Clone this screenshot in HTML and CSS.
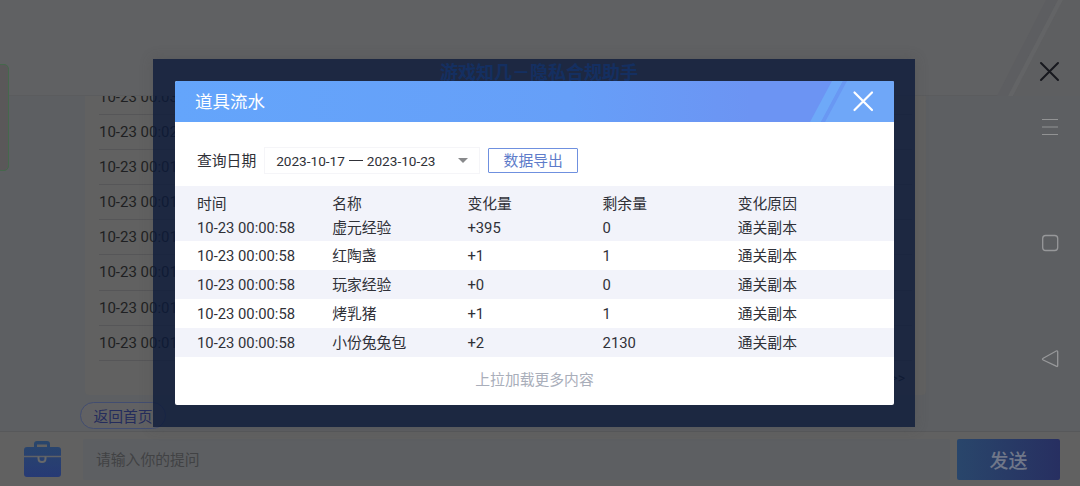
FILE: index.html
```html
<!DOCTYPE html>
<html lang="zh-CN">
<head>
  <meta charset="UTF-8">
  <title>道具流水</title>
  <link rel="stylesheet" href="styles.css">
</head>
<body>
  <div class="page">
    <header class="main-header">
      <h1>游戏知几－隐私合规助手</h1>
      <svg class="stripes" width="90" height="96" viewBox="0 0 90 96">
        <path d="M56 0H68L18 96H7z" fill="#5d5e61"/>
        <path d="M68 0H73L23 96H18z" fill="#636466"/>
        <path d="M73 0H90V96H23z" fill="#5e5f61"/>
      </svg>
    </header>

    <main class="chat">
      <div class="record-card">
        <ul class="record-list">
          <li>10-23 00:03</li>
          <li>10-23 00:02</li>
          <li>10-23 00:01</li>
          <li>10-23 00:01</li>
          <li>10-23 00:01</li>
          <li>10-23 00:01</li>
          <li>10-23 00:01</li>
          <li>10-23 00:01</li>
        </ul>
        <p class="record-more">&gt;&gt;</p>
      </div>
      <button class="home-btn">返回首页</button>
    </main>

    <footer class="input-bar">
      <svg class="case-icon" width="37" height="36" viewBox="0 0 37 36">
        <defs>
          <linearGradient id="case" x1="0" y1="0" x2="0" y2="1">
            <stop offset="0" stop-color="#29466b"/>
            <stop offset="1" stop-color="#273a75"/>
          </linearGradient>
        </defs>
        <path fill="url(#case)" fill-rule="evenodd" d="M10 6V3Q10 0 13 0H23Q26 0 26 3V6H34Q37 6 37 9V33Q37 36 34 36H3Q0 36 0 33V9Q0 6 3 6zM13 6H23V3.500H13z"/>
        <path d="M0 15.500H37" stroke="#5f6266" stroke-width="1.300"/>
        <path d="M14.500 15.500V17.500Q14.500 21 18 21Q21.500 21 21.500 17.500V15.500" fill="none" stroke="#66686a" stroke-width="2"/>
      </svg>
      <div class="question">请输入你的提问</div>
      <button class="send-btn">发送</button>
    </footer>
  </div>

  <div class="edge-handle"></div>
  <div class="frame"></div>

  <section class="modal">
    <div class="modal-header">
      <h2>道具流水</h2>
      <svg class="header-art" width="90" height="41" viewBox="0 0 90 41">
        <path d="M28 0H39L17 41H6z" fill="#6ea9f8"/>
        <path d="M39 0H43L21 41H17z" fill="#6998f3"/>
        <path d="M43 0H90V41H21z" fill="#6fa7f8"/>
        <path d="M50.500 11.500L68 29M68 11.500L50.500 29" stroke="#fff" stroke-width="2.200" stroke-linecap="round"/>
      </svg>
    </div>

    <div class="filter">
      <label>查询日期</label>
      <div class="date-select">
        <span>2023-10-17</span><i class="dash"></i><span>2023-10-23</span>
        <i class="arrow"></i>
      </div>
      <button class="export-btn">数据导出</button>
    </div>

    <div class="table">
      <div class="row head"><span>时间</span><span>名称</span><span>变化量</span><span>剩余量</span><span>变化原因</span></div>
      <div class="row first"><span>10-23 00:00:58</span><span>虚元经验</span><span>+395</span><span>0</span><span>通关副本</span></div>
      <div class="row"><span>10-23 00:00:58</span><span>红陶盏</span><span>+1</span><span>1</span><span>通关副本</span></div>
      <div class="row gray"><span>10-23 00:00:58</span><span>玩家经验</span><span>+0</span><span>0</span><span>通关副本</span></div>
      <div class="row"><span>10-23 00:00:58</span><span>烤乳猪</span><span>+1</span><span>1</span><span>通关副本</span></div>
      <div class="row gray"><span>10-23 00:00:58</span><span>小份兔兔包</span><span>+2</span><span>2130</span><span>通关副本</span></div>
    </div>
    <p class="load-more">上拉加载更多内容</p>
  </section>

  <svg class="system-icons" width="24" height="320" viewBox="0 0 24 320">
    <path d="M4 4L21 21M21 4L4 21" stroke="#17181e" stroke-width="2" stroke-linecap="round"/>
    <path d="M5 60.500H21M5 68H21M5 75.500H21" stroke="#929394" stroke-width="1.200"/>
    <rect x="5.700" y="176.500" width="15" height="15" rx="3" fill="none" stroke="#97989a" stroke-width="1.300"/>
    <path d="M6.200 299.200L19.200 292Q20.700 291.500 20.700 293V306.500Q20.700 308 19.200 307.200L6.200 301Q4.700 300 6.200 299.200z" fill="none" stroke="#97989a" stroke-width="1.300"/>
  </svg>
</body>
</html>
```

FILE: styles.css
```css
* {
  box-sizing: border-box;
  margin: 0;
  padding: 0;
}

body {
  width: 1080px;
  height: 486px;
  overflow: hidden;
  position: relative;
  font-family: Roboto, "Noto Sans CJK SC", sans-serif;
  background: #5f6163;
}

button {
  font-family: inherit;
}

.page {
  display: flex;
  flex-direction: column;
  height: 486px;
}

.main-header {
  height: 96px;
  flex-shrink: 0;
  display: flex;
  justify-content: space-between;
  background: #606163;
  border-bottom: 1px solid #5b5c5e;
}

.main-header h1 {
  padding: 60px 0 0 440px;
  font-size: 18px;
  line-height: 26px;
  font-weight: 700;
  color: #3484ff;
}

.chat {
  height: 335px;
  flex-shrink: 0;
  padding-left: 80px;
  background: #5d5f62;
}

.record-card {
  width: 841px;
  height: 299px;
  margin-left: 5px;
  padding: 0 14px;
  overflow: hidden;
  background: #616161;
  border-radius: 0 0 4px 4px;
}

.record-list {
  list-style: none;
  margin-top: -16px;
}

.record-list li {
  height: 35.1px;
  line-height: 35px;
  font-size: 15px;
  color: #1e1f22;
  border-bottom: 1px solid #565658;
}

.record-more {
  margin-right: 7px;
  text-align: right;
  font-size: 14px;
  line-height: 34px;
  color: #1e1f22;
}

.home-btn {
  display: block;
  width: 86px;
  height: 27px;
  margin-top: 7px;
  padding-top: 2px;
  font-size: 14.8px;
  line-height: 25px;
  color: #242c5c;
  background: #616163;
  border: 1px solid #424d70;
  border-radius: 14px;
}

.input-bar {
  height: 55px;
  flex-shrink: 0;
  display: flex;
  align-items: center;
  padding: 0 20px 0 24px;
  background: #616161;
  border-top: 1px solid #57585a;
}

.question {
  flex: 1;
  height: 41px;
  margin: 0 7px 0 22px;
  padding-left: 13px;
  line-height: 42px;
  font-size: 14.8px;
  color: #414244;
  background: #5d5f62;
  border-radius: 2px;
}

.send-btn {
  width: 103px;
  height: 41px;
  border: none;
  border-radius: 2px;
  font-size: 19px;
  font-weight: 500;
  color: #707789;
  background: linear-gradient(90deg, #29466b, #272f61);
}

.edge-handle {
  position: absolute;
  left: -4px;
  top: 64px;
  width: 13px;
  height: 107px;
  background: #5a5859;
  border: 1px solid #45684c;
  border-radius: 5px;
}

/* translucent, the page behind shows faintly */
.frame {
  position: absolute;
  left: 153px;
  top: 59px;
  width: 762px;
  height: 368px;
  background: rgba(13, 26, 58, 0.8);
  box-shadow: 0 0 12px rgba(70, 70, 70, 0.3);
}

.modal {
  position: absolute;
  left: 175px;
  top: 81px;
  width: 719px;
  height: 324px;
  overflow: hidden;
  background: #fff;
  border-radius: 2px;
}

.modal-header {
  height: 41px;
  display: flex;
  justify-content: space-between;
  background: linear-gradient(90deg, #64a5fb, #669ff8 55%, #6c94f3 80%);
}

.modal-header h2 {
  padding-left: 20px;
  font-size: 17.5px;
  line-height: 42px;
  font-weight: 400;
  color: #fff;
}

.filter {
  height: 64px;
  display: flex;
  align-items: center;
  padding: 13px 0 0 22px;
  font-size: 14.8px;
  line-height: 20px;
  color: #303138;
}

.date-select {
  width: 216px;
  height: 27px;
  margin: 0 8px;
  padding: 0 11px;
  display: flex;
  align-items: center;
  font-size: 13.6px;
  line-height: 18px;
  border: 1px solid #f5f5f8;
}

.dash {
  width: 14px;
  height: 1px;
  margin: 0 4px;
  background: #303138;
}

.arrow {
  margin-left: auto;
  border: 5px solid transparent;
  border-top-color: #88898b;
  border-bottom: none;
}

.export-btn {
  width: 90px;
  height: 25px;
  font-size: 14.8px;
  line-height: 22px;
  color: #5e7cca;
  background: #fff;
  border: 1px solid #6f90df;
  border-radius: 1px;
}

.row {
  display: grid;
  grid-template-columns: repeat(5, 135.2px);
  height: 29px;
  padding-left: 22px;
  line-height: 31px;
  font-size: 14.8px;
  color: #303138;
}

.row.head {
  height: 28px;
  line-height: 37px;
  background: #f2f3fa;
}

.row.first {
  height: 27px;
  line-height: 28px;
  background: #f2f3fa;
}

.row.gray {
  background: #f2f3fa;
}

.load-more {
  text-align: center;
  font-size: 14.8px;
  line-height: 47px;
  color: #a9aeba;
}

.system-icons {
  position: absolute;
  left: 1037px;
  top: 59px;
}
```
